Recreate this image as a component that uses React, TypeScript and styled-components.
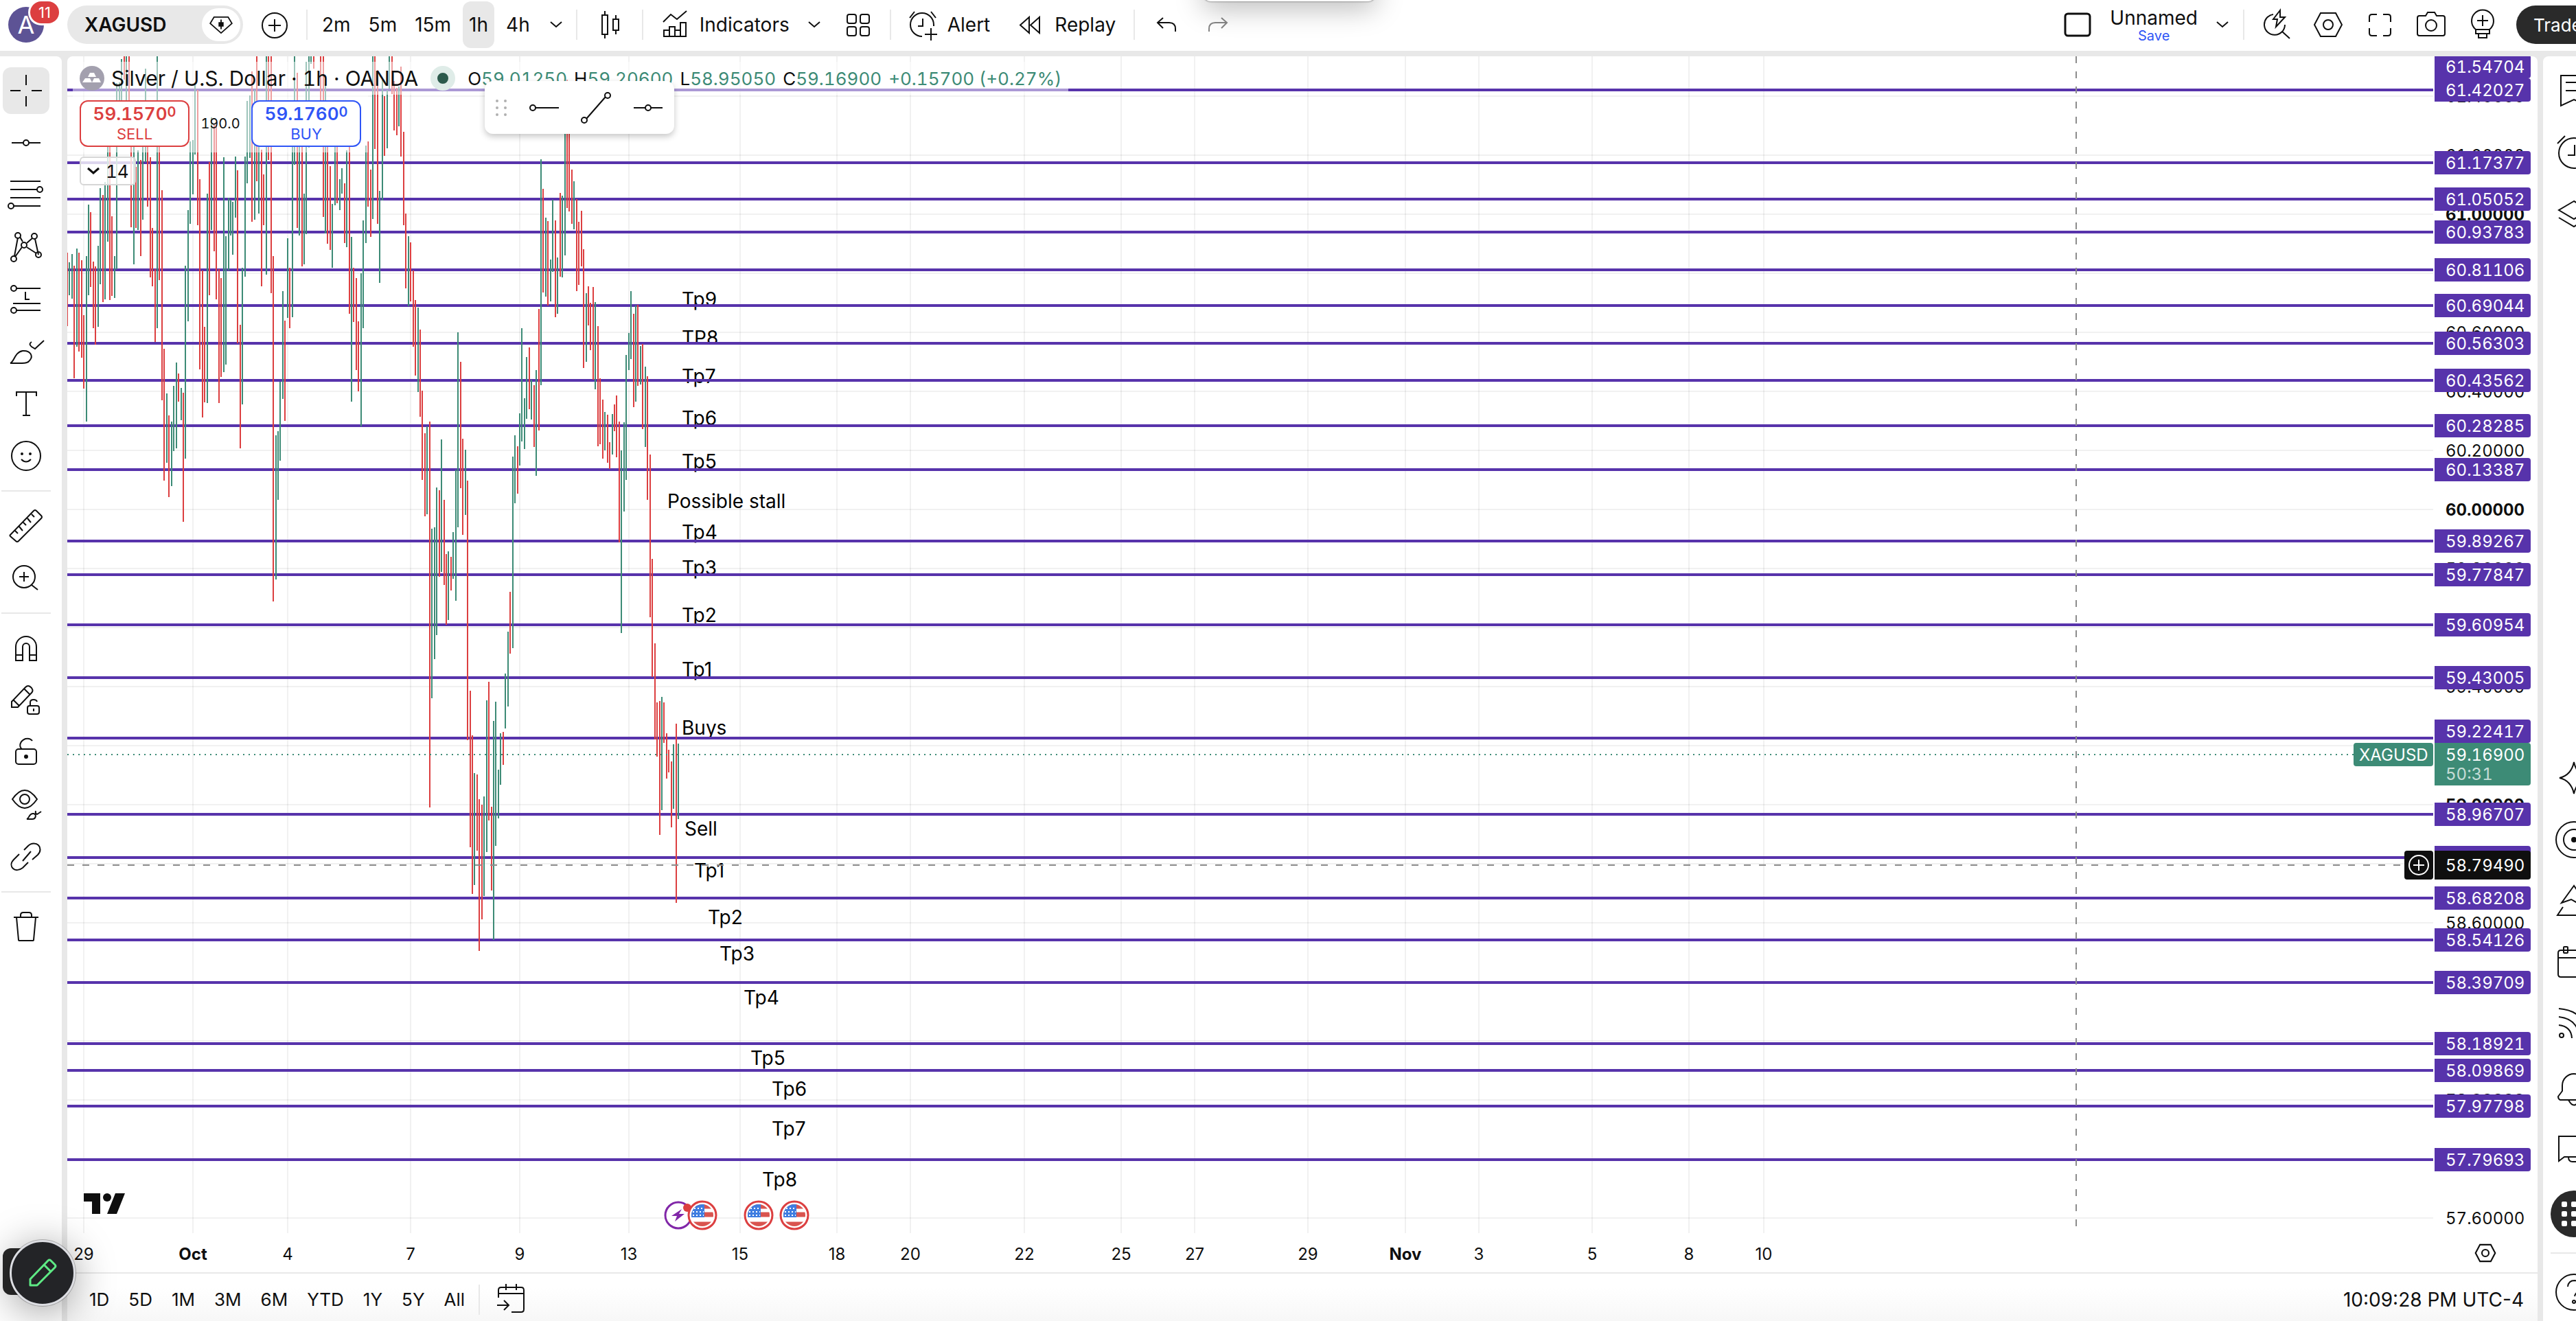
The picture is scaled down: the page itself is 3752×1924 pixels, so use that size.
import React from 'react';
import styled, { createGlobalStyle, css } from 'styled-components';

const INK = '#0f0f0f';
const GREEN = '#3d8b76';
const RED = '#dc3f40';
const PURPLE = '#5733ab';
const BLUE = '#2f55f6';
const LINE = '#e8e8e8';
const FONT = "Inter, 'Liberation Sans', sans-serif";

const Global = createGlobalStyle`
  *, *::before, *::after { box-sizing: border-box; }
  html, body, #root { height: 100%; margin: 0; }
  body { overflow: hidden; background: ${LINE}; color: ${INK}; font-family: ${FONT}; }
  button { font: inherit; color: inherit; background: none; border: 0; padding: 0; margin: 0; cursor: pointer; }
  svg { display: block; flex-shrink: 0; }
`;

/* ---------- layout ---------- */

const Shell = styled.div`
  display: flex;
  flex-direction: column;
  gap: 8px;
  width: calc(100% + 42px);
  height: 100vh;
`;

const TopBar = styled.header`
  display: flex;
  align-items: center;
  flex-shrink: 0;
  height: 74px;
  padding: 0 8px 2px 12px;
  background: #fff;
  font-size: 28px;
`;

const Body = styled.div`
  display: flex;
  flex: 1;
  gap: 8px;
  min-height: 0;
`;

const SideBar = styled.nav<{ $right?: boolean }>`
  display: flex;
  flex-direction: column;
  align-items: ${(p) => (p.$right ? 'center' : 'flex-start')};
  gap: ${(p) => (p.$right ? 22 : 8)}px;
  width: 90px;
  flex-shrink: 0;
  padding: ${(p) => (p.$right ? '16px 0 8px' : '16px 0 8px 4px')};
  background: #fff;
  border-radius: ${(p) => (p.$right ? '8px 0 0 0' : '0 8px 0 0')};
`;

const ChartPanel = styled.main`
  display: flex;
  flex-direction: column;
  flex: 1;
  min-width: 0;
  background: #fff;
  border-radius: 8px 8px 0 0;
  overflow: hidden;
`;

const PaneRow = styled.div`
  display: flex;
  flex: 1;
  min-height: 0;
`;

const Pane = styled.div`
  position: relative;
  flex: 1;
  min-width: 0;
  overflow: hidden;
`;

const PriceAxis = styled.div`
  width: 152px;
  flex-shrink: 0;
  font-variant-numeric: tabular-nums;
`;

const TimeRow = styled.div`
  display: flex;
  height: 57px;
  flex-shrink: 0;
`;

const AxisCorner = styled.div`
  display: flex;
  align-items: center;
  justify-content: center;
  width: 152px;
`;

const BottomBar = styled.footer`
  display: flex;
  align-items: center;
  height: 71px;
  flex-shrink: 0;
  padding: 6px 20px 0 18px;
  border-top: 2px solid ${LINE};
  background: linear-gradient(#fff 30%, #f7f7f7);
  font-size: 26px;
`;

/* ---------- controls ---------- */

const IconButton = styled.button<{ $w?: number; $dim?: boolean }>`
  display: flex;
  align-items: center;
  justify-content: center;
  flex-shrink: 0;
  width: ${(p) => p.$w ?? 56}px;
  height: 68px;
  opacity: ${(p) => (p.$dim ? 0.5 : 1)};
`;

const ToolButton = styled.button<{ $active?: boolean; $dark?: boolean }>`
  display: flex;
  align-items: center;
  justify-content: center;
  flex-shrink: 0;
  width: 68px;
  height: 68px;
  && {
    margin-top: ${(p) => (p.$dark ? 5 : 0)}px;
  }
  border-radius: ${(p) => (p.$dark ? 34 : 12)}px;
  background: ${(p) => (p.$active ? LINE : p.$dark ? '#2a2a2a' : 'none')};
`;

const TextButton = styled.button`
  display: flex;
  align-items: center;
  gap: 8px;
  height: 68px;
  white-space: nowrap;
`;

const Group = styled.div<{ $gap?: number; $l?: number; $r?: number }>`
  display: flex;
  align-items: center;
  gap: ${(p) => p.$gap ?? 0}px;
  padding-left: ${(p) => p.$l ?? 0}px;
  padding-right: ${(p) => p.$r ?? 0}px;
`;

const RightGroup = styled(Group)`
  margin-left: auto;
`;

const Divider = styled.span`
  width: 2px;
  height: 44px;
  flex-shrink: 0;
  background: ${LINE};
`;

const Rule = styled.span<{ $right?: boolean }>`
  width: ${(p) => (p.$right ? 68 : 72)}px;
  height: 2px;
  margin: ${(p) => (p.$right ? 0 : 8)}px 0;
  margin-left: ${(p) => (p.$right ? 0 : -2)}px;
  flex-shrink: 0;
  background: ${LINE};
`;

const Stretch = styled.span`
  flex: 1;
`;

const Avatar = styled.button`
  position: relative;
  width: 52px;
  height: 52px;
  && {
    margin-right: 34px;
  }
  border-radius: 26px;
  background: #5d5395;
  color: #fff;
  font-size: 36px;
  line-height: 52px;
`;

const Badge = styled.span`
  position: absolute;
  top: -8px;
  right: -22px;
  width: 42px;
  height: 32px;
  border-radius: 16px;
  background: ${RED};
  box-shadow: 0 0 0 3px #fff;
  font-size: 22px;
  line-height: 32px;
`;

const SymbolPill = styled.div`
  display: flex;
  align-items: center;
  justify-content: space-between;
  width: 256px;
  height: 56px;
  padding: 0 4px 0 25px;
  border-radius: 28px;
  background: ${LINE};
`;

const SymbolName = styled.button`
  font-weight: 600;
`;

const GemButton = styled.button`
  display: flex;
  align-items: center;
  justify-content: center;
  width: 56px;
  height: 48px;
  border-radius: 24px;
  background: #fff;
`;

const FrameButton = styled.button<{ $active?: boolean }>`
  height: 68px;
  padding: 0 9px;
  border-radius: 12px;
  background: ${(p) => (p.$active ? LINE : 'none')};
`;

const LayoutName = styled.button`
  display: flex;
  flex-direction: column;
  align-items: center;
  margin-right: 6px;
  line-height: 32px;
`;

const SaveText = styled.span`
  color: ${BLUE};
  font-size: 20px;
  line-height: 20px;
`;

const TradeButton = styled.button`
  width: 121px;
  height: 56px;
  margin-left: 2px;
  border-radius: 28px 0 0 28px;
  padding-left: 25px;
  background: #2a2a2a;
  color: #fff;
  font-size: 26px;
  text-align: left;
`;

const RangeButton = styled.button`
  padding: 0 14px;
  height: 56px;
`;

const Clock = styled.button`
  margin-left: auto;
  height: 56px;
  font-size: 28px;
`;

/* ---------- legend over the chart ---------- */

const Legend = styled.div`
  position: absolute;
  top: 8px;
  left: 8px;
  font-variant-numeric: tabular-nums;
`;

const veil = css`
  background: rgba(255, 255, 255, 0.5);
`;

const TitleRow = styled.div`
  ${veil}
  display: flex;
  align-items: center;
  width: max-content;
  height: 48px;
  padding: 0 0 0 10px;
`;

const Title = styled.h1`
  margin: 0 18px 0 10px;
  font-size: 30px;
  font-weight: 400;
  white-space: nowrap;
`;

const StatusDot = styled.span`
  width: 36px;
  height: 36px;
  margin-right: 18px;
  border: 10px solid #dfece8;
  border-radius: 18px;
  background: #2c5a4c;
`;

const Ohlc = styled.span`
  margin-right: 10px;
  font-size: 26px;
  white-space: nowrap;
`;

const Up = styled.span`
  color: ${GREEN};
`;

const TradeRow = styled.div`
  ${veil}
  display: flex;
  align-items: center;
  width: 430px;
  height: 84px;
  padding-left: 10px;
`;

const QuoteButton = styled.button<{ $color: string }>`
  width: 160px;
  height: 68px;
  && {
    border: 2px solid ${(p) => p.$color};
    background: #fff;
    color: ${(p) => p.$color};
  }
  border-radius: 12px;
  font-size: 22px;
  line-height: 26px;
`;

const Quote = styled.span`
  display: block;
  font-size: 26px;
  font-weight: 600;
  line-height: 28px;
`;

const Pip = styled.span`
  position: relative;
  top: -5px;
  font-size: 20px;
`;

const Spread = styled.span`
  width: 90px;
  font-size: 20px;
  text-align: center;
`;

const CollapseButton = styled.button`
  display: flex;
  align-items: center;
  gap: 8px;
  height: 42px;
  && {
    margin: 6px 0 0 10px;
    padding: 0 8px 0 8px;
    border: 2px solid #d6d6d6;
  }
  border-radius: 6px;
  background: rgba(255, 255, 255, 0.8);
  font-size: 26px;
`;

const DrawBar = styled.div`
  position: absolute;
  top: 36px;
  left: 608px;
  display: flex;
  align-items: center;
  gap: 20px;
  width: 276px;
  height: 77px;
  padding-left: 16px;
  border-radius: 12px;
  background: #fff;
  box-shadow: 0 4px 10px rgba(0, 0, 0, 0.22);
`;

const Grip = styled.svg`
  margin-right: 6px;
`;

const LogoLink = styled.a`
  position: absolute;
  left: 22px;
  bottom: 26px;
`;

const TopPopup = styled.div`
  position: fixed;
  top: -40px;
  left: 1752px;
  width: 252px;
  height: 42px;
  border-radius: 0 0 12px 12px;
  background: #fff;
  box-shadow: 0 0 2px 1px rgba(0, 0, 0, 0.3), 0 10px 40px rgba(0, 0, 0, 0.28);
`;

const Dock = styled.div`
  position: fixed;
  left: 4px;
  bottom: 38px;
  width: 60px;
  height: 68px;
  border-radius: 12px;
  background: #2a2a2a;
`;

const EditFab = styled.button`
  position: fixed;
  left: 14px;
  bottom: 22px;
  display: flex;
  align-items: center;
  justify-content: center;
  width: 96px;
  height: 96px;
  && {
    border: 3px solid #dcdde2;
    background: #232427;
  }
  border-radius: 48px;
  box-shadow: 0 0 0 1px rgba(0, 0, 0, 0.25), 0 8px 60px rgba(0, 0, 0, 0.4);
`;

/* ---------- icons, drawn on a 56 unit grid ---------- */

type IconProps = { children: React.ReactNode; size?: number; w?: number };

const Icon = ({ children, size = 56, w = 2 }: IconProps) => (
  <svg width={size} height={size} viewBox="0 0 56 56" fill="none" stroke="currentColor" strokeWidth={w} aria-hidden="true">
    {children}
  </svg>
);

const Chevron = ({ w = 2 }: { w?: number }) => (
  <svg width="20" height="12" viewBox="0 0 20 12" fill="none" stroke="currentColor" strokeWidth={w} aria-hidden="true">
    <path d="M2 2l8 7 8-7" />
  </svg>
);

const icons = {
  gem: <><path d="M17 16h22l6 10-17 15-17-15z" /><path d="M28 20v15" /><path d="M25 25h6v5h-6z" fill="currentColor" /></>,
  plus: <><circle cx="28" cy="29" r="18" /><path d="M28 20v18M19 29h18" /></>,
  candles: <><path d="M17 14h8v28h-8zM21 8v6M21 42v6M33 20h8v16h-8zM37 14v6M37 36v6" /></>,
  indicators: <><path d="M11 24l11-11 9 7 14-12" /><path d="M12 45v-9h8v9M20 45V31h8v14M28 36h8M36 45V25h8v20M11 45h34" /></>,
  grid: <><rect x="12" y="13" width="13" height="13" rx="3" /><rect x="31" y="13" width="13" height="13" rx="3" /><rect x="12" y="31" width="13" height="13" rx="3" /><rect x="31" y="31" width="13" height="13" rx="3" /></>,
  alert: <><path d="M27 45a17 17 0 1 1 17-17v2" /><path d="M28 19v11h-7M9 18l7-9M47 18l-7-9M40 33v18M31 42h18" /></>,
  replay: <path d="M27 17v23L14 28.500zM42 17v23L29 28.500z" />,
  undo: <path d="M23 18l-8 7 8 8M15 25h17q9 0 9 9v4" />,
  redo: <path d="M33 18l8 7-8 8M41 25H24q-9 0-9 9v4" />,
  square: <rect x="10" y="12" width="36" height="32" rx="4" />,
  quickSearch: <><path d="M23 13a15 15 0 1 0 17 15M36 38l11 10" /><path d="M33 7L23 20h6l-2 11 13-14h-7z" /></>,
  hex: <><path d="M17 11h22l9 17-9 17H17L8 28z" /><circle cx="28" cy="28" r="7" /></>,
  full: <path d="M13 24v-7q0-4 4-4h7M33 13h7q4 0 4 4v7M44 33v7q0 4-4 4h-7M24 44h-7q-4 0-4-4v-7" />,
  camera: <><path d="M11 15h9l3-5h10l3 5h9q3 0 3 3v23q0 3-3 3H11q-3 0-3-3V18q0-3 3-3z" /><circle cx="28" cy="29" r="8" /></>,
  bulb: <><path d="M18 35a16 16 0 1 1 20 0v6H18zM18 35h20M22 41v6h12v-6M28 14v16M20 22h16" /></>,
  cross: <path d="M28 5v15M28 36v15M5 28h15M36 28h15" />,
  hline: <><path d="M7 28h17M32 28h17" /><circle cx="28" cy="28" r="4" /></>,
  hray: <><path d="M16 28h34" /><circle cx="12" cy="28" r="4" /></>,
  trend: <><path d="M14 44l28-32" /><circle cx="11" cy="46" r="4" /><circle cx="45" cy="10" r="4" /></>,
  fib: <><path d="M5 8h44M5 20h39M5 32h44M10 44h39" /><circle cx="48" cy="20" r="4" /><circle cx="6" cy="44" r="4" /></>,
  pattern: <><path d="M11 41l5-27M19 13l4 7M29 22l8-7M41 16l5 23M43 37L29 28M22 28L12 42" /><circle cx="10" cy="45" r="4" /><circle cx="16" cy="11" r="4" /><circle cx="25" cy="25" r="4" /><circle cx="40" cy="12" r="4" /><circle cx="46" cy="39" r="4" /></>,
  position: <><path d="M14 12h35M9 34h40M14 44h35M27 17v11h6" /><circle cx="10" cy="12" r="4" /><circle cx="10" cy="44" r="4" /></>,
  brush: <><path d="M5 45c6-2 6-16 18-18 12-1 15 8 11 13-3 5-8 5-12 5z" /><path d="M36 14q-5 3 0 7l5 3L54 12" /></>,
  text: <path d="M14 17v-6h29v6M28 11v34M23 45h11" />,
  smile: <><circle cx="28" cy="28" r="21" /><circle cx="22" cy="25" r="1" fill="currentColor" /><circle cx="34" cy="25" r="1" fill="currentColor" /><path d="M21 33q7 7 14 0" /></>,
  ruler: <path d="M5 41L39 6q2-2 4 0l7 7q2 2 0 4L17 50q-2 2-4 0l-8-7q-1-1 0-2zM12 35l4 4M18 29l5 6M24 23l4 4M30 17l5 6M36 11l4 4" />,
  zoom: <><circle cx="25" cy="26" r="16" /><path d="M25 19v14M18 26h14M36 38l9 7" /></>,
  magnet: <path d="M13 46V26a15 15 0 0 1 30 0v20H33V26a5 5 0 0 0-10 0v20zM13 38h10M33 38h10" />,
  pencilLock: <><path d="M7 38v-8L27 9q4-4 8 0l1 1q3 4 0 7L16 38zM10 28l8 8M25 11l9 9" /><rect x="30" y="36" width="17" height="12" rx="3" /><path d="M34 36v-5q0-4 5-4 4 0 5 3M39 40v4" /></>,
  unlock: <><rect x="13" y="23" width="30" height="22" rx="4" /><path d="M22 23c-5-4-3-12 5-15 5-1 8 0 10 3" /><circle cx="28" cy="34" r="2" fill="currentColor" /></>,
  eye: <><path d="M8 20q18-26 36 0Q26 46 8 20z" /><circle cx="26" cy="20" r="7" /><path d="M29 49c4-1 3-9 10-8 5 1 3 8-2 8zM42 37q-1 4 2 5l6-4" /></>,
  link: <path d="M25 18l6-6c5-5 12-4 15-1s4 9-1 14l-8 7M31 36l-8 8c-5 4-11 4-14 1s-4-8 1-13l8-8M23 34l12-14" />,
  trash: <><path d="M10 14h36M14 14l3 33q0 1 2 1h18q2 0 2-1l3-33M20 14v-3q0-4 4-4h8q4 0 4 4v3" /></>,
  watchlist: <path d="M9 6h38v44l-19-9-19 9zM16 16h24M16 28h24" />,
  clock: <><circle cx="28" cy="29" r="22" /><path d="M29 17v15H19M4 15L15 4M52 15L41 4" /></>,
  layers: <path d="M28 9L6 22l22 13 22-13zM6 33l22 13 22-13" />,
  spark: <path d="M28 5q4 19 21 23-17 4-21 23-4-19-21-23Q24 24 28 5z" />,
  target: <><circle cx="28" cy="28" r="26" /><circle cx="28" cy="28" r="15" /><circle cx="28" cy="28" r="3" fill="currentColor" /></>,
  pyramid: <path d="M28 5L10 30l14-5 7 4 15 1zM12 36L4 48h48l-8-12" />,
  calendar: <><path d="M18 9H9q-4 0-4 4v31q0 4 4 4h38q4 0 4-4V13q0-4-4-4h-9M5 20h46M19 9h18" /><rect x="13" y="4" width="6" height="9" rx="1" /><rect x="37" y="4" width="6" height="9" rx="1" /></>,
  feed: <><circle cx="10" cy="43" r="3" /><path d="M6 28q18 2 19 19M6 16q28 3 30 31M6 4q40 3 42 43" /></>,
  bell: <path d="M11 34V26a17 17 0 0 1 34 0v8l6 8q0 4-3 5H8q-3-1-3-5zM20 47q8 15 16 0" />,
  chat: <path d="M6 10h44v30H14l-8 6zM20 40q0 7 6 7h20l6 4V22" />,
  help: <><circle cx="28" cy="28" r="26" /><path d="M19 20q1-9 10-9 9 1 9 9c0 7-8 7-9 14" /><circle cx="28" cy="42" r="2" /></>,
  goto: <path d="M9 25V14q0-4 4-4h29q4 0 4 4v28q0 4-4 4H28M9 19h37M20 5v9M35 5v9M7 36h16M17 29l7 7-7 7" />,
};

type IconName = keyof typeof icons;

const leftTools: (readonly [IconName, string] | null)[] = [
  ['cross', 'Cross'], ['hline', 'Horizontal line'], ['fib', 'Fib retracement'], ['pattern', 'Patterns'],
  ['position', 'Long position'], ['brush', 'Brush'], ['text', 'Text'], ['smile', 'Emoji'], null,
  ['ruler', 'Measure'], ['zoom', 'Zoom in'], null,
  ['magnet', 'Magnet mode'], ['pencilLock', 'Keep drawing'], ['unlock', 'Lock drawings'], ['eye', 'Hide drawings'],
  ['link', 'Sync drawings'], null, ['trash', 'Remove drawings'],
];

const rightTop: [IconName, string][] = [['watchlist', 'Watchlist'], ['clock', 'Alerts'], ['layers', 'Object tree']];
const rightBottom: [IconName, string][] = [
  ['spark', 'Assistant'], ['target', 'Screener'], ['pyramid', 'Pine'], ['calendar', 'Calendar'],
  ['feed', 'News'], ['bell', 'Notifications'], ['chat', 'Chats'],
];

/* ---------- chart data ---------- */

const PX_PER_UNIT = 430;
const priceY = (p: number) => Math.round(49 + (61.42027 - p) * PX_PER_UNIT);
const capBaseline = (center: number, size: number) => Math.round(center + size * 0.364);

const levels = [
  61.42027, 61.17377, 61.05052, 60.93783, 60.81106, 60.69044, 60.56303, 60.43562, 60.28285, 60.13387,
  59.89267, 59.77847, 59.60954, 59.43005, 59.22417, 58.96707, 58.82, 58.68208, 58.54126, 58.39709,
  58.18921, 58.09869, 57.97798, 57.79693,
];

const ticks = Array.from({ length: 20 }, (_, i) => (614 - i * 2) / 10);

/* Scale labels fully behind a tag, or behind the last price and cursor blocks, are not drawn. */
const openTicks = ticks.filter(
  (t) => t !== 59.2 && t !== 58.8 && levels.every((p) => Math.abs(priceY(p) - priceY(t)) > 7),
);

const dates: [number, string][] = [
  [24, '29'], [183, 'Oct'], [321, '4'], [500, '7'], [659, '9'], [818, '13'], [980, '15'], [1121, '18'],
  [1228, '20'], [1394, '22'], [1535, '25'], [1642, '27'], [1807, '29'], [1949, 'Nov'], [2056, '3'],
  [2221, '5'], [2362, '8'], [2471, '10'],
];

const notes: [number, number, string][] = [
  [896, 354, 'Tp9'], [896, 410, 'TP8'], [896, 466, 'Tp7'], [896, 527, 'Tp6'], [896, 590, 'Tp5'],
  [875, 648, 'Possible stall'], [896, 693, 'Tp4'], [896, 745, 'Tp3'], [896, 814, 'Tp2'], [896, 893, 'Tp1'],
  [896, 978, 'Buys'], [900, 1125, 'Sell'], [914, 1186, 'Tp1'], [934, 1254, 'Tp2'], [951, 1307, 'Tp3'],
  [986, 1371, 'Tp4'], [996, 1459, 'Tp5'], [1027, 1504, 'Tp6'], [1027, 1562, 'Tp7'], [1013, 1636, 'Tp8'],
];

/* Each bar is "x high low", a trailing r or g gives its colour. */
const earlyBars = `25 564 774r,33 592 686g,45 568 696g,54 602 923r,66 553 833g,75 564 847r,87 586 864r,96 743 953r,108 574 1047g,
117 427 686g,126 449 662r,138 590 780r,147 604 827r,159 545 776g,168 380 655g,180 400 706r,189 363 698g,201 200 533g,210 200 700r,
219 461 688r,231 574 694g,240 80 612g,252 78 200g,261 12 200g,273 4 70r,282 4 130g,294 4 200r,303 200 492r,315 200 598g,324 320 494r,
333 272 500g,345 300 574r,354 200 470g,366 39 306g,375 200 433r,387 292 635r,396 494 661r,408 612 820r,417 4 780g,426 200 643r,
438 386 986r,447 839 1215r,459 966 1164g,468 1029 1262r,480 1047 1231g,489 945 1130g,501 878 1123g,510 909 990r,522 951 1043g,
531 964 1333r,540 602 1152g,552 443 760g,561 247 482g,573 243 398g,582 85 284g,594 100 486r,603 355 898r,615 616 1035r,624 776 992r,
636 396 994g,645 306 686r,654 178 500g,666 200 561r,675 200 698r,687 612 994r,696 637 919r,708 292 906g,717 517 884g,729 408 616g,
738 414 515g,747 419 570g,759 290 465g,768 329 823r,780 770 1123r,789 608 998g,801 290 633g,810 131 367g,822 116 294g,831 48 476r,
843 100 470g,852 4 361r,861 200 453g,873 270 661r,882 341 486r,894 4 627g,903 4 300r,915 4 680r,924 574 1561r,936 1086 1497g,
945 1074 1270g,954 933 1158g,966 674 982g,975 759 1045r,987 523 751g,996 608 780r,1008 200 749g,1017 4 314g,1029 50 494r,1038 200 515g,
1050 200 604r,1059 396 598g,1068 20 512g,1080 4 265g,1089 4 25g,1101 4 39r,1131 4 200r,1143 4 463r,1152 82 510g,1161 200 539r,
1173 318 557r,1182 425 608g,1194 200 429g,1203 200 423r,1215 355 443g,1224 323 396g,1236 367 537r,1245 272 549g,1257 230 738r,
1266 519 990g,1275 608 762r,1287 637 900r,1296 760 960r,1308 623 1061g,1317 472 780g,1329 259 537g,1338 247 433r,1350 327 519r,
1359 4 468g,1368 4 269r,1380 43 482r,1389 388 651g,1401 70 416g,1410 118 288r,1422 100 267g,1431 4 97g,1443 4 112r,1452 75 216r,
1464 95 229r,1473 90 204g,1482 33 290r,1494 220 486r,1503 453 666r,1515 517 718g,1524 535 704r`;

const lateBars = `126 373 505r,135 424 555r,147 437 583g,156 475 626r,165 581 735r,177 655 798r,186 643 795g,198 634 1302r,207 820 1113g,
219 817 1045g,228 748 1004g,240 753 903r,249 665 894g,261 770 917r,270 864 986r,279 859 978g,291 868 927r,300 826 906g,312 717 944g,
321 480 817g,333 531 750r,342 664 830r,354 683 796g,363 736 1185r,375 1100 1371r,384 1177 1452r,393 1243 1436g,405 1245 1377r,
414 1288 1550r,426 1297 1496r,435 1283 1455g,447 1117 1379g,456 1085 1324r,468 1301 1446r,477 1152 1531g,486 1119 1368g,498 1237 1321g,
507 1174 1263g,519 1171 1228r,528 1070 1165g,540 998 1127g,549 929 1036r,561 695 1026g,570 658 776g,582 677 759r,591 620 710g,
600 473 669g,612 594 682g,621 523 630g,633 506 613r,642 562 631g,654 571 678r,663 545 728g,675 440 650r,684 181 571g,693 232 411r,
705 282 418g,714 287 434r,726 354 426g,735 251 375g,747 286 454r,756 350 448g,768 239 384r,777 244 385g,789 100 347g,798 43 265r,
807 100 271r,819 198 292r,828 219 302g,840 249 409r,849 289 398r,861 270 366r,870 336 542r,882 412 531g,891 400 468r,900 429 511r,
912 402 562r,921 428 578g,933 469 677r,942 559 674r,954 596 698r,963 618 684g,975 622 706r,984 670 716r,996 621 691g,1005 605 651r,
1014 589 696r,1026 634 843r,1035 684 1000g,1047 636 790g,1056 519 735g,1068 481 545g,1077 409 526g,1089 448 609r,1098 434 600g,
1107 432 573r,1119 504 570g,1128 500 647r,1140 539 678g,1149 556 770r,1161 691 973r,1170 872 1076r,1182 1018 1184r,1191 1120 1214r,
1203 1118 1349r,1212 1111 1307g,1221 1120 1190r,1233 1174 1252r,1242 1202 1241r,1254 1222 1336r,1263 1193 1304g,1275 1157 1467r,
1284 1191 1322g`;

const readBars = (src: string, x0: number, yScale: number) =>
  src.split(',').map((row) => {
    const [x, high, low] = row.trim().split(' ');
    const top = Math.round(parseInt(high, 10) / yScale) - 2;
    const bottom = Math.round(parseInt(low, 10) / yScale) - 2;
    return {
      x: Math.round(x0 + parseInt(x, 10) / 3) - 1,
      y: top,
      h: bottom - top,
      fill: row.trim().endsWith('r') ? RED : GREEN,
    };
  });

const bars = [...readBars(earlyBars, -8, 1.96), ...readBars(lateBars, 462, 1.1879)];

/* ---------- chart parts ---------- */

const Flag = ({ x }: { x: number }) => (
  <g transform={`translate(${x} 1688)`}>
    <circle r="20" fill="#fff" stroke={RED} strokeWidth="3" />
    <clipPath id={`flag${x}`}><circle r="16" /></clipPath>
    <g clipPath={`url(#flag${x})`}>
      <path d="M-16-13h32M-16-1h32M-16 13h32" stroke="#d9544f" strokeWidth="7" />
      <rect x="-16" y="-16" width="19" height="19" fill="#3f7de0" />
      <path d="M-12-10h14M-14-5h16M-14 0h16" stroke="#fff" strokeWidth="2" strokeDasharray="2 3" />
    </g>
  </g>
);

const PaneDrawing = () => (
  <svg width="100%" height="100%" fontFamily={FONT} role="img" aria-label="XAGUSD price chart">
    <g fill="rgba(15,15,15,0.06)">
      {ticks.map((t) => <rect key={t} x="0" y={priceY(t) - 1} width="100%" height="2" />)}
      {dates.map(([x]) => <rect key={x} x={x - 1} y="0" width="2" height="100%" />)}
    </g>
    <g fill="#000" fontSize="28">
      {notes.map(([x, y, label]) => <text key={y} x={x - 1} y={capBaseline(y, 28)}>{label}</text>)}
    </g>
    <g fill={PURPLE}>
      {levels.map((p) => <rect key={p} x="0" y={priceY(p) - 2} width="100%" height="4" />)}
    </g>
    {bars.map((b) => <rect key={b.x} x={b.x} y={b.y} width="2" height={b.h} fill={b.fill} />)}
    <line x1="0" x2="100%" y1={priceY(59.169)} y2={priceY(59.169)} stroke={GREEN} strokeWidth="2" strokeDasharray="2 6" />
    <g stroke="#8c8c8c" strokeWidth="2" strokeDasharray="10 12">
      <line x1="0" x2="100%" y1="1178" y2="1178" />
      <line x1="2926" x2="2926" y1="0" y2="100%" />
    </g>
    <circle cx="890" cy="1688" r="19" fill="#fff" stroke="#8127a8" strokeWidth="3" />
    <path d="M895 1679l-15 10h8l-3 8 14-11h-8z" fill="#8127a8" />
    <circle cx="903" cy="1677" r="6" fill={RED} />
    <Flag x={925} />
    <Flag x={1007} />
    <Flag x={1059} />
    <svg x="100%" y="0" overflow="visible">
      <rect x="-116" y="1000" width="116" height="34" rx="4" fill={GREEN} />
      <text x="-108" y={capBaseline(1017, 24)} fontSize="24" fill="#fff">XAGUSD</text>
      <rect x="-42" y="1157" width="42" height="42" rx="4" fill="#0f0f0f" />
      <g fill="none" stroke="#fff" strokeWidth="2">
        <circle cx="-21" cy="1178" r="14" />
        <path d="M-29 1178h16M-21 1170v16" />
      </g>
    </svg>
  </svg>
);

const PriceTag = ({ center, children, h = 34, fill = PURPLE }: { center: number; children: string; h?: number; fill?: string }) => (
  <>
    <path d={`M2 ${center - h / 2}h136q4 0 4 4v${h - 8}q0 4-4 4h-136z`} fill={fill} />
    <text x="18" y={capBaseline(center, 24)} fill="#fff">{children}</text>
  </>
);

const AxisDrawing = () => (
  <svg width="100%" height="100%" fontFamily={FONT} fontSize="24" role="img" aria-label="Price scale">
    {openTicks.map((t) => (
      <text key={t} x="18" y={capBaseline(priceY(t), 24)} fill={INK} fontWeight={t % 1 === 0 ? 700 : 400}>{t.toFixed(5)}</text>
    ))}
    <PriceTag center={15}>61.54704</PriceTag>
    {levels.filter((p) => p !== 59.22417 && p !== 58.82).map((p) => <PriceTag key={p} center={priceY(p)}>{p.toFixed(5)}</PriceTag>)}
    <path d="M2 1150h136q4 0 4 4v20H2z" fill={PURPLE} />
    <PriceTag center={983}>59.22417</PriceTag>
    <path d="M2 1000h136q4 0 4 4v54q0 4-4 4H2z" fill={GREEN} />
    <text x="18" y={capBaseline(1017, 24)} fill="#fff">59.16900</text>
    <text x="18" y={capBaseline(1045, 24)} fill="#fff" opacity="0.7">50:31</text>
    <PriceTag center={1178} h={42} fill="#0f0f0f">58.79490</PriceTag>
  </svg>
);

const TimeDrawing = () => (
  <Pane>
    <svg width="100%" height="100%" fontFamily={FONT} fontSize="24" textAnchor="middle" role="img" aria-label="Time scale">
      {dates.map(([x, label]) => (
        <text key={x} x={x} y={capBaseline(30, 24)} fill={INK} fontWeight={label === 'Oct' || label === 'Nov' ? 700 : 400}>{label}</text>
      ))}
    </svg>
  </Pane>
);

const SilverMark = () => (
  <svg width="36" height="36" viewBox="0 0 36 36" aria-hidden="true">
    <circle cx="18" cy="18" r="18" fill="#a3a0ae" />
    <path d="M15 10h6l3 6H12zM8 18h7l3 6H4zM21 18h7l3 6H18z" fill="#fff" />
  </svg>
);

const BrandMark = () => (
  <svg width="64" height="34" viewBox="0 0 64 34" aria-hidden="true">
    <path d="M2 2h24v30H14V14H2zM48 2h14L50 32H36z" fill={INK} stroke="#fff" strokeWidth="4" paintOrder="stroke" />
    <circle cx="36" cy="8" r="6" fill={INK} />
  </svg>
);

const QuoteBox = ({ price, side, color }: { price: string; side: string; color: string }) => (
  <QuoteButton $color={color}>
    <Quote>{price}<Pip>0</Pip></Quote>
    {side}
  </QuoteButton>
);

const ohlc: [string, string][] = [['O', '59.01250'], ['H', '59.20600'], ['L', '58.95050'], ['C', '59.16900']];

export default function App() {
  return (
    <>
      <Global />
      <Shell>
        <TopBar>
          <Avatar aria-label="Account">A<Badge>11</Badge></Avatar>
          <SymbolPill>
            <SymbolName>XAGUSD</SymbolName>
            <GemButton aria-label="Symbol details"><Icon size={52}>{icons.gem}</Icon></GemButton>
          </SymbolPill>
          <IconButton $w={92} aria-label="Compare"><Icon>{icons.plus}</Icon></IconButton>
          <Divider />
          <Group $gap={8} $l={12}>
            {['2m', '5m', '15m', '1h', '4h'].map((f) => <FrameButton key={f} $active={f === '1h'}>{f}</FrameButton>)}
          </Group>
          <IconButton $w={58} aria-label="More intervals"><Chevron /></IconButton>
          <Divider />
          <IconButton $w={94} aria-label="Chart type"><Icon>{icons.candles}</Icon></IconButton>
          <Divider />
          <Group $gap={8} $l={18} $r={18}>
            <TextButton><Icon>{icons.indicators}</Icon>Indicators</TextButton>
            <IconButton aria-label="Favourite indicators"><Chevron /></IconButton>
            <IconButton aria-label="Indicator templates"><Icon>{icons.grid}</Icon></IconButton>
          </Group>
          <Divider />
          <Group $gap={30} $l={18} $r={26}>
            <TextButton><Icon>{icons.alert}</Icon>Alert</TextButton>
            <TextButton><Icon>{icons.replay}</Icon>Replay</TextButton>
          </Group>
          <Divider />
          <Group $gap={19} $l={18}>
            <IconButton aria-label="Undo"><Icon>{icons.undo}</Icon></IconButton>
            <IconButton $dim aria-label="Redo"><Icon>{icons.redo}</Icon></IconButton>
          </Group>
          <RightGroup $gap={19}>
            <IconButton aria-label="Layout setup"><Icon w={3}>{icons.square}</Icon></IconButton>
            <Group $gap={8}>
              <LayoutName>Unnamed<SaveText>Save</SaveText></LayoutName>
              <IconButton $w={44} aria-label="Manage layouts"><Chevron /></IconButton>
              <Divider />
            </Group>
            <IconButton aria-label="Quick search"><Icon>{icons.quickSearch}</Icon></IconButton>
            <IconButton aria-label="Settings"><Icon>{icons.hex}</Icon></IconButton>
            <IconButton aria-label="Fullscreen"><Icon>{icons.full}</Icon></IconButton>
            <IconButton aria-label="Snapshot"><Icon>{icons.camera}</Icon></IconButton>
            <IconButton aria-label="Publish idea"><Icon>{icons.bulb}</Icon></IconButton>
            <TradeButton>Trade</TradeButton>
          </RightGroup>
        </TopBar>

        <Body>
          <SideBar aria-label="Drawing tools">
            {leftTools.map((t, i) =>
              t ? (
                <ToolButton key={t[0]} $active={t[0] === 'cross'} aria-label={t[1]}><Icon>{icons[t[0]]}</Icon></ToolButton>
              ) : (
                <Rule key={i} />
              ),
            )}
          </SideBar>

          <ChartPanel>
            <PaneRow>
              <Pane>
                <PaneDrawing />
                <Legend>
                  <TitleRow>
                    <SilverMark />
                    <Title>Silver / U.S. Dollar · 1h · OANDA</Title>
                    <StatusDot />
                    {ohlc.map(([k, v]) => <Ohlc key={k}>{k}<Up>{v}</Up></Ohlc>)}
                    <Up><Ohlc>+0.15700 (+0.27%)</Ohlc></Up>
                  </TitleRow>
                  <TradeRow>
                    <QuoteBox price="59.1570" side="SELL" color={RED} />
                    <Spread>190.0</Spread>
                    <QuoteBox price="59.1760" side="BUY" color={BLUE} />
                  </TradeRow>
                  <CollapseButton><Chevron w={3} />14</CollapseButton>
                </Legend>
                <DrawBar>
                  <Grip width="16" height="26" viewBox="0 0 16 26" fill="#b0b0b0" aria-hidden="true">
                    {[3, 13, 23].map((y) => <g key={y}><circle cx="2" cy={y} r="2" /><circle cx="14" cy={y} r="2" /></g>)}
                  </Grip>
                  <IconButton aria-label="Horizontal ray"><Icon>{icons.hray}</Icon></IconButton>
                  <IconButton aria-label="Trend line"><Icon>{icons.trend}</Icon></IconButton>
                  <IconButton aria-label="Horizontal line"><Icon>{icons.hline}</Icon></IconButton>
                </DrawBar>
                <LogoLink href="#" aria-label="Home"><BrandMark /></LogoLink>
              </Pane>
              <PriceAxis><AxisDrawing /></PriceAxis>
            </PaneRow>
            <TimeRow>
              <TimeDrawing />
              <AxisCorner><IconButton aria-label="Scale settings"><Icon size={40} w={3}>{icons.hex}</Icon></IconButton></AxisCorner>
            </TimeRow>
            <BottomBar>
              {['1D', '5D', '1M', '3M', '6M', 'YTD', '1Y', '5Y', 'All'].map((r) => <RangeButton key={r}>{r}</RangeButton>)}
              <Group $l={6}><Divider /></Group>
              <IconButton $w={92} aria-label="Go to date"><Icon>{icons.goto}</Icon></IconButton>
              <Clock>10:09:28 PM UTC-4</Clock>
            </BottomBar>
          </ChartPanel>

          <SideBar $right aria-label="Widgets">
            {rightTop.map(([n, label]) => <ToolButton key={n} aria-label={label}><Icon>{icons[n]}</Icon></ToolButton>)}
            <Stretch />
            {rightBottom.map(([n, label]) => <ToolButton key={n} aria-label={label}><Icon>{icons[n]}</Icon></ToolButton>)}
            <ToolButton $dark aria-label="More products">
              <svg width="40" height="40" viewBox="0 0 40 40" fill="#fff" aria-hidden="true">
                {[2, 16, 30].map((y) => [2, 16, 30].map((x) => <rect key={`${x}-${y}`} x={x} y={y} width="8" height="8" rx="2" />))}
              </svg>
            </ToolButton>
            <Rule $right />
            <ToolButton aria-label="Help"><Icon>{icons.help}</Icon></ToolButton>
          </SideBar>
        </Body>
      </Shell>
      <TopPopup />
      <Dock />
      <EditFab aria-label="Edit">
        <svg width="44" height="44" viewBox="0 0 44 44" fill="none" stroke="#5eea85" strokeWidth="3" strokeLinejoin="round" aria-hidden="true">
          <path d="M4 40v-9L30 4q2-2 4 0l6 6q2 2 0 4L14 40zM24 10l10 10" />
        </svg>
      </EditFab>
    </>
  );
}
